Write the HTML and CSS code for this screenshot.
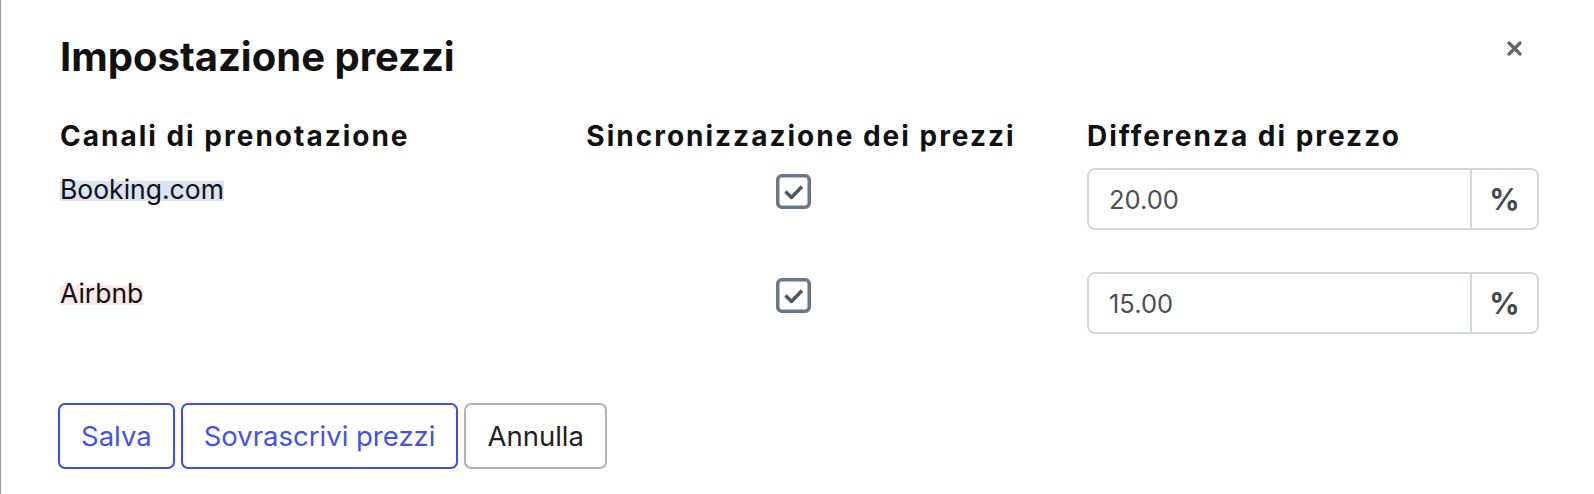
FILE: index.html
```html
<!DOCTYPE html>
<html lang="it">
<head>
    <meta charset="UTF-8">
    <meta name="viewport" content="width=device-width, initial-scale=1.0">
    <title>Impostazione prezzi</title>
    <link rel="stylesheet" href="styles.css">
</head>
<body>

    <div class="modal">
        <button class="close" aria-label="Chiudi">
            <svg width="15" height="15" viewBox="0 0 15 15">
                <path d="M2 2 L13 13 M13 2 L2 13" stroke="#666" stroke-width="3.2" stroke-linecap="round"/>
            </svg>
        </button>

        <h1>Impostazione prezzi</h1>

        <div class="channels">
            <div class="row head">
                <div>Canali di prenotazione</div>
                <div class="center">Sincronizzazione dei prezzi</div>
                <div>Differenza di prezzo</div>
            </div>

            <div class="row">
                <div class="channel"><span class="mark booking">Booking.com</span></div>
                <div class="center">
                    <svg class="check" width="35" height="35" viewBox="0 0 35 35">
                        <rect x="1.75" y="1.75" width="31.5" height="31.5" rx="4" fill="none" stroke="#66788a" stroke-width="3.5"/>
                        <path d="M9.5 17.5 L15.5 23.5 L26 12.5" fill="none" stroke="#4a5966" stroke-width="3.4" stroke-linejoin="round"/>
                    </svg>
                </div>
                <div class="field">
                    <input type="text" value="20.00">
                    <span class="addon">%</span>
                </div>
            </div>

            <div class="row">
                <div class="channel"><span class="mark airbnb">Airbnb</span></div>
                <div class="center">
                    <svg class="check" width="35" height="35" viewBox="0 0 35 35">
                        <rect x="1.75" y="1.75" width="31.5" height="31.5" rx="4" fill="none" stroke="#66788a" stroke-width="3.5"/>
                        <path d="M9.5 17.5 L15.5 23.5 L26 12.5" fill="none" stroke="#4a5966" stroke-width="3.4" stroke-linejoin="round"/>
                    </svg>
                </div>
                <div class="field">
                    <input type="text" value="15.00">
                    <span class="addon">%</span>
                </div>
            </div>
        </div>

        <div class="actions">
            <button class="btn primary">Salva</button>
            <button class="btn primary">Sovrascrivi prezzi</button>
            <button class="btn">Annulla</button>
        </div>
    </div>

</body>
</html>
```

FILE: styles.css
```css
body {
    margin: 0;
    font-family: Inter, "Noto Sans", sans-serif;
    background-color: #fff;
    color: #111;
}
.modal {
    position: relative;
    min-height: 494px;
    box-sizing: border-box;
    padding: 33px 56px 0 59px;
    border-left: 1px solid #9a9a9a;
}
.close {
    position: absolute;
    top: 41px;
    right: 72px;
    padding: 0;
    border: none;
    background: none;
    line-height: 0;
    cursor: pointer;
}
h1 {
    margin: 0;
    font-size: 40px;
    line-height: 48px;
    font-weight: 700;
}
.channels {
    margin-top: 38px;
}
.row {
    display: grid;
    grid-template-columns: 455px 430px 452px;
    column-gap: 71px;
    align-items: start;
    margin-bottom: 42px;
}
.row.head {
    font-size: 28px;
    line-height: 34px;
    font-weight: 700;
    letter-spacing: 2px;
    margin-bottom: 15px;
}
.center {
    text-align: center;
}
.channel {
    padding-top: 6px;
    font-size: 26.5px;
    line-height: 31px;
}
.mark {
    color: #111;
}
.booking {
    background: linear-gradient(to bottom, transparent 24%, #d9e3f4 24%, #d9e3f4 86%, transparent 86%);
}
.airbnb {
    background: linear-gradient(to bottom, transparent 24%, #fce8e9 24%, #fce8e9 86%, transparent 86%);
}
.check {
    display: inline-block;
    margin-top: 6px;
    margin-right: 16px;
}
.field {
    display: flex;
    height: 62px;
    box-sizing: border-box;
    border: 2px solid #d4d8dd;
    border-radius: 8px;
    overflow: hidden;
}
.field input {
    flex: 1;
    min-width: 0;
    border: none;
    outline: none;
    padding: 0 20px;
    font-family: Inter, "Noto Sans", sans-serif;
    font-size: 25.5px;
    color: #4c5056;
    background: #fff;
}
.addon {
    width: 65px;
    display: flex;
    align-items: center;
    justify-content: center;
    border-left: 2px solid #d4d8dd;
    font-size: 30px;
    font-weight: 700;
    color: #45494e;
}
.actions {
    display: flex;
    gap: 6px;
    margin-top: 69px;
    margin-left: -2px;
}
.btn {
    height: 66px;
    padding: 0 21px;
    border: 2px solid #b3b3b3;
    border-radius: 7px;
    background: #fff;
    font-family: Inter, "Noto Sans", sans-serif;
    font-size: 27.5px;
    color: #222;
    cursor: pointer;
}
.btn.primary {
    border-color: #3b4cf0;
    color: #4252ee;
}
```
